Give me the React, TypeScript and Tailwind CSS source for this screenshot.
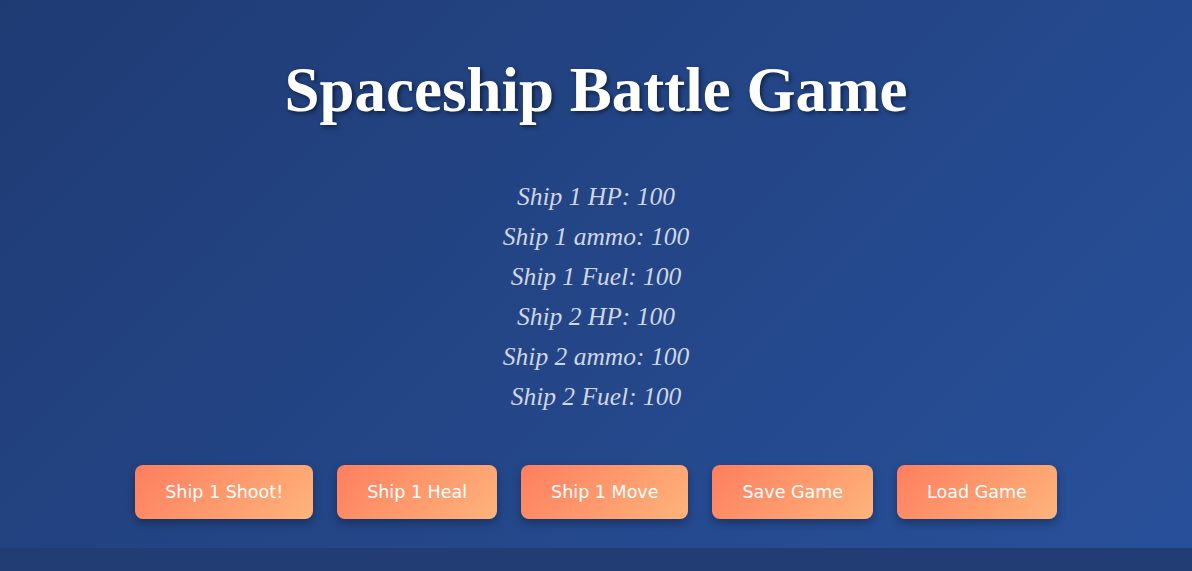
const stats = [
  "Ship 1 HP: 100",
  "Ship 1 ammo: 100",
  "Ship 1 Fuel: 100",
  "Ship 2 HP: 100",
  "Ship 2 ammo: 100",
  "Ship 2 Fuel: 100",
];

const actions = ["Ship 1 Shoot!", "Ship 1 Heal", "Ship 1 Move", "Save Game", "Load Game"];

export default function App() {
  return (
    <div className="min-h-[571px] bg-[#213d74]">
      <div className="flex flex-col items-center bg-[linear-gradient(135deg,#1f3b74,#28509a)] pt-[52px] pb-[29px]">
        <h1 className="font-['Liberation_Serif',serif] text-[63px] font-bold leading-[76px] text-white [text-shadow:2px_2px_4px_rgba(0,0,0,0.5)]">
          Spaceship Battle Game
        </h1>
        <div className="mt-[49px] flex flex-col items-center">
          {stats.map((s) => (
            <p
              key={s}
              className="font-['Liberation_Serif',serif] text-[25.5px] italic leading-[40px] text-[#d0d6e3]"
            >
              {s}
            </p>
          ))}
        </div>
        <div className="mt-[48px] flex gap-6">
          {actions.map((a) => (
            <button
              key={a}
              className="h-[54px] rounded-lg bg-[linear-gradient(135deg,#ff7e5f,#feb47b)] px-[30px] font-['DejaVu_Sans',sans-serif] text-[17.5px] text-white shadow-[0_4px_8px_rgba(0,0,0,0.3)]"
            >
              {a}
            </button>
          ))}
        </div>
      </div>
    </div>
  );
}
